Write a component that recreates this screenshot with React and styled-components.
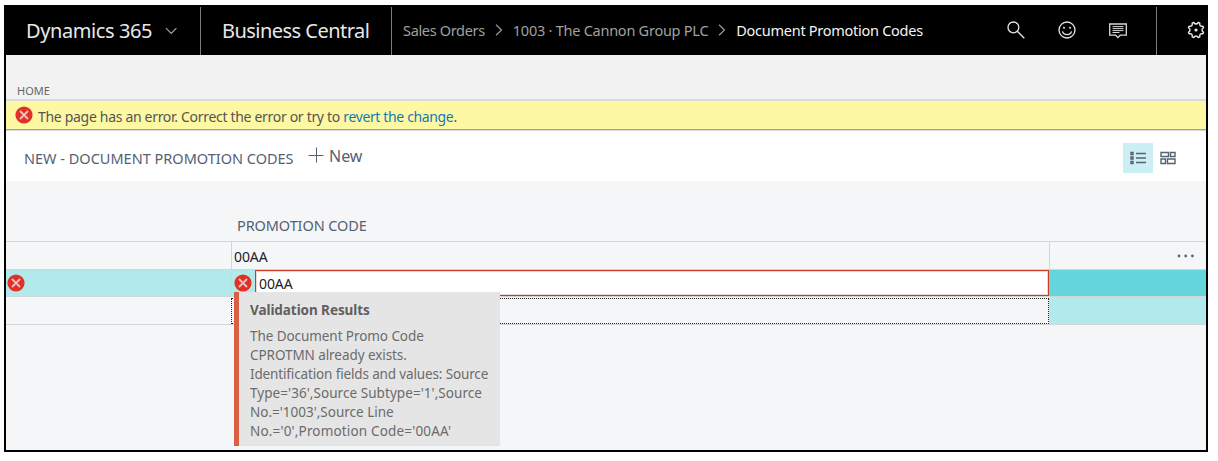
import React from "react";
import styled, { createGlobalStyle } from "styled-components";

const Global = createGlobalStyle`
  * { box-sizing: border-box; }
  body { margin: 0; background: #fff; font-family: "Noto Sans", "Open Sans", sans-serif; }
`;

const Frame = styled.div`
  width: 1204px;
  height: 447px;
  margin: 5px 0 0 4px;
  border: 2px solid #000;
  background: #f5f6f8;
  display: flex;
  flex-direction: column;
  overflow: hidden;
`;

const Label = styled.span`
  font-size: ${(p) => p.$size || 14}px;
  letter-spacing: ${(p) => p.$track || 0}px;
  font-weight: ${(p) => p.$weight || 400};
  color: ${(p) => p.$color || "#555"};
  white-space: nowrap;
  line-height: 20px;
`;

const TopBar = styled.header`
  height: 48px;
  flex: none;
  display: flex;
  background: #000;
`;

const Brand = styled.div`
  width: ${(p) => p.$width}px;
  padding-left: ${(p) => p.$pad}px;
  border-right: 1px solid #7a7a7a;
  display: flex;
  align-items: center;
  gap: 13px;
`;

const Crumbs = styled.nav`
  flex: 1;
  display: flex;
  align-items: center;
  padding: 0 0 2px 11px;
`;

const CrumbArrow = styled.svg`
  width: 8px;
  height: 12px;
  margin: 0 10px;
`;

const Actions = styled.div`
  display: flex;
  align-items: center;
  gap: 31px;
  width: 159px;
  padding: 0 0 2px 8px;
  border-right: 1px solid #7a7a7a;
`;

const Settings = styled.div`
  width: 49px;
  padding: 0 0 2px 29px;
  display: flex;
  align-items: center;
`;

const Icon = styled.svg`
  flex: none;
  display: block;
`;

const Ribbon = styled.div`
  height: 46px;
  flex: none;
  background: #f2f2f2;
  border-bottom: 2px solid #d9d9dc;
  padding: 26px 0 0 11px;
  display: flex;
`;

const Notice = styled.div`
  height: 29px;
  flex: none;
  background: #fdf8a2;
  border-bottom: 1px solid #a2a196;
  display: flex;
  align-items: center;
  padding: 3px 0 0 9px;
`;

const NoticeIcon = styled.div`
  margin: -3px 5px 0 0;
`;

const TitleBar = styled.div`
  height: 51px;
  flex: none;
  background: #fff;
  border-top: 1px solid #d8d9df;
  display: flex;
  align-items: center;
  padding: 0 23px 0 18px;
`;

const Heading = styled.div`
  padding-top: 4px;
  width: 284px;
  display: flex;
`;

const NewButton = styled.div`
  flex: 1;
  display: flex;
  align-items: center;
  gap: 5px;
  padding-bottom: 1px;
  svg { margin-bottom: 2px; }
`;

const ViewButton = styled.div`
  width: 30px;
  height: 30px;
  margin-top: 4px;
  display: flex;
  align-items: center;
  justify-content: center;
  background: ${(p) => (p.$active ? "#cbeff3" : "transparent")};
`;

const HeadRow = styled.div`
  height: 61px;
  flex: none;
  border-bottom: 1px solid #d4d5d8;
  padding: 34px 0 0 231px;
  display: flex;
`;

const Row = styled.div`
  height: ${(p) => p.$height}px;
  flex: none;
  display: grid;
  grid-template-columns: 225px 818px 157px;
  border-bottom: 1px solid #d4d5d8;
`;

const Cell = styled.div`
  display: flex;
  align-items: center;
  min-width: 0;
  position: relative;
  background: ${(p) => p.$bg || "transparent"};
  border-left: ${(p) => (p.$line ? "1px solid #d4d5d8" : "0")};
  padding-left: ${(p) => p.$pad || 0}px;
`;

const TextCell = styled(Cell)`
  padding: 2px 0 0 2px;
`;

const EditCell = styled(Cell)`
  padding-left: 2px;
  gap: 3px;
`;

const Input = styled.div`
  flex: 1;
  height: 26px;
  background: #fff;
  border: 1px solid #cb3c25;
  box-shadow: inset 0 0 0 1px #f4d6d0;
  padding: 1px 0 0 3px;
  display: flex;
  align-items: center;
`;

const DottedCell = styled(Cell)`
  border: 1px dotted #222;
  margin-top: 1px;
`;

const Tooltip = styled.div`
  position: absolute;
  z-index: 2;
  top: 22px;
  left: 2px;
  width: 266px;
  height: 154px;
  background: #e5e5e5;
  border-left: 5px solid #d96043;
  padding: 8px 0 0 11px;
  display: flex;
  flex-direction: column;
`;

const Message = styled.div`
  display: flex;
  flex-direction: column;
  margin-top: 7px;
  span { line-height: 18.9px; }
`;

const ErrorIcon = () => (
  <Icon width="18" height="18" viewBox="0 0 18 18">
    <circle cx="9" cy="9" r="8.6" fill="#e23026" />
    <path d="M5 5l8 8M13 5l-8 8" stroke="#e9c3bd" strokeWidth="1.8" />
  </Icon>
);

const Arrow = () => (
  <CrumbArrow viewBox="0 0 8 12" fill="none" stroke="#999" strokeWidth="1.2">
    <path d="M1 .8L6.5 6 1 11.2" />
  </CrumbArrow>
);

const message = [
  ["The Document Promo Code", -0.07],
  ["CPROTMN already exists.", -0.07],
  ["Identification fields and values: Source", -0.14],
  ["Type='36',Source Subtype='1',Source", 0.06],
  ["No.='1003',Source Line", 0],
  ["No.='0',Promotion Code='00AA'", 0.17],
];

export default function App() {
  return (
    <>
      <Global />
      <Frame>
        <TopBar>
          <Brand $width={195} $pad={20}>
            <Label $size={20} $track={-0.4} $color="#e8e8e8">Dynamics 365</Label>
            <Icon width="13" height="8" viewBox="0 0 13 8" fill="none" stroke="#aaa" strokeWidth="1.1">
              <path d="M1 1.2L6.2 6.4 11.4 1.2" />
            </Icon>
          </Brand>
          <Brand $width={191} $pad={21}>
            <Label $size={20} $track={-0.53} $color="#e8e8e8">Business Central</Label>
          </Brand>
          <Crumbs>
            <Label $size={14.5} $track={-0.33} $color="#a0a0a0">Sales Orders</Label>
            <Arrow />
            <Label $size={14.5} $track={-0.25} $color="#a0a0a0">1003 · The Cannon Group PLC</Label>
            <Arrow />
            <Label $size={14.5} $track={-0.27} $color="#f4f4f4">Document Promotion Codes</Label>
          </Crumbs>
          <Actions>
            <Icon width="20" height="20" viewBox="0 0 20 20" fill="none" stroke="#e6e6e6" strokeWidth="1.3">
              <circle cx="7.4" cy="7.4" r="5.4" />
              <path d="M11.3 11.3L18.3 18.2" />
            </Icon>
            <Icon width="20" height="20" viewBox="0 0 20 20" fill="none" stroke="#e6e6e6" strokeWidth="1.3">
              <circle cx="10" cy="10" r="8" />
              <path d="M5.5 11.3c1 4.3 8 4.3 9 0" />
              <circle cx="7" cy="7.7" r="1" fill="#e6e6e6" stroke="none" />
              <circle cx="13" cy="7.7" r="1" fill="#e6e6e6" stroke="none" />
            </Icon>
            <Icon width="20" height="20" viewBox="0 0 20 20" fill="none" stroke="#d8d8d8" strokeWidth="1.3">
              <path d="M1.7 4h16.6v11.2h-6.1L9.9 17.6 7.7 15.2h-6z" />
              <path d="M4.5 6.6h11M4.5 8.6h11M4.5 10.6h11M4.5 12.5h7" strokeWidth="1" />
            </Icon>
          </Actions>
          <Settings>
            <Icon width="20" height="20" viewBox="0 0 20 20" fill="none" stroke="#ececec" strokeWidth="1.4" strokeLinejoin="round">
              <path d="M7.8 2.5Q10 5.6 12.2 2.5L13.8 3.1Q13.2 6.8 16.9 6.2L17.5 7.8Q14.4 10 17.5 12.2L16.9 13.8Q13.2 13.2 13.8 16.9L12.2 17.5Q10 14.4 7.8 17.5L6.2 16.9Q6.8 13.2 3.1 13.8L2.5 12.2Q5.6 10 2.5 7.8L3.1 6.2Q6.8 6.8 6.2 3.1z" />
              <circle cx="10" cy="10" r="1.6" fill="#ececec" stroke="none" />
            </Icon>
          </Settings>
        </TopBar>
        <Ribbon>
          <Label $size={11} $color="#666">HOME</Label>
        </Ribbon>
        <Notice>
          <NoticeIcon><ErrorIcon /></NoticeIcon>
          <Label $track={-0.31} $color="#555">
            The page has an error. Correct the error or try to{" "}
            <Label $track={-0.36} $color="#1478b8">revert the change</Label>.
          </Label>
        </Notice>
        <TitleBar>
          <Heading>
            <Label $size={14.5} $track={0} $color="#566171">NEW - DOCUMENT PROMOTION CODES</Label>
          </Heading>
          <NewButton>
            <Icon width="16" height="16" viewBox="0 0 16 16" stroke="#566171" strokeWidth="1">
              <path d="M8.5 .5v15M.5 8.5h15" />
            </Icon>
            <Label $size={16} $color="#566171">New</Label>
          </NewButton>
          <ViewButton $active>
            <Icon width="16" height="14" viewBox="0 0 16 14" fill="none" stroke="#566171" strokeWidth="1.4">
              <path d="M1 1.5h2v2H1zM1 6h2v2H1zM1 10.5h2v2H1zM6 2.5h10M6 7h10M6 11.5h10" />
            </Icon>
          </ViewButton>
          <ViewButton>
            <Icon width="16" height="14" viewBox="0 0 16 14" fill="none" stroke="#566171" strokeWidth="1.4">
              <path d="M1 1.5h7.5v4H1zM10.5 1.5H15v4h-4.5zM1 8h4.5v4.5H1zM7.5 8H15v4.5H7.5z" />
            </Icon>
          </ViewButton>
        </TitleBar>
        <HeadRow>
          <Label $size={14.5} $track={-0.1} $color="#566171">PROMOTION CODE</Label>
        </HeadRow>
        <Row $height={28}>
          <Cell />
          <TextCell $line>
            <Label $size={14} $track={-0.1} $color="#222">00AA</Label>
          </TextCell>
          <Cell $line $pad={127}>
            <Icon width="18" height="4" viewBox="0 0 18 4" fill="#60656d">
              <circle cx="2" cy="2" r="1.4" />
              <circle cx="8.7" cy="2" r="1.4" />
              <circle cx="15.4" cy="2" r="1.4" />
            </Icon>
          </Cell>
        </Row>
        <Row $height={27}>
          <Cell $bg="#b2e9eb" $pad={1}><ErrorIcon /></Cell>
          <EditCell $bg="#b2e9eb" $line>
            <ErrorIcon />
            <Input><Label $size={14} $track={-0.1} $color="#222">00AA</Label></Input>
            <Tooltip>
              <Label $size={13.5} $track={-0.07} $weight={700} $color="#5f5f5f">Validation Results</Label>
              <Message>
                {message.map(([text, track]) => (
                  <Label key={text} $size={13.5} $track={track} $color="#6b6b6b">{text}</Label>
                ))}
              </Message>
            </Tooltip>
          </EditCell>
          <Cell $bg="#64d5db" />
        </Row>
        <Row $height={28}>
          <Cell />
          <DottedCell />
          <Cell $bg="#b2e9eb" />
        </Row>
      </Frame>
    </>
  );
}
